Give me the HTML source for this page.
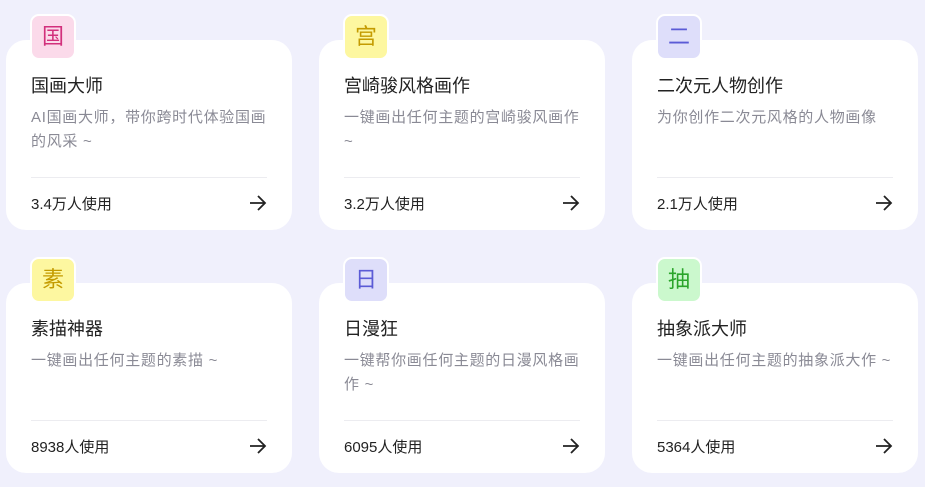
<!DOCTYPE html>
<html><head><meta charset="utf-8"><style>
body{margin:0;width:925px;height:487px;background:#f0f0fc;font-family:"Liberation Sans","Noto Sans CJK SC",sans-serif;position:relative;overflow:hidden}
.card{position:absolute;width:286px;height:190px;background:#fff;border-radius:20px}
.badge{position:absolute;left:24px;top:-26px;width:42px;height:42px;border:2px solid #fff;border-radius:9px;font-size:22px;line-height:42px;text-align:center}
.t{position:absolute;left:25px;top:32px;font-size:18px;color:#222}
.d{position:absolute;left:25px;top:66px;width:260px;font-size:15px;line-height:24px;color:#8a8a95;white-space:nowrap;letter-spacing:0.7px}
.hr{position:absolute;left:25px;right:25px;top:137px;border-top:1px solid #ececf0}
.u{position:absolute;left:25px;top:153px;font-size:15px;color:#222}
.a{position:absolute;right:25px;top:155px}
</style></head><body>
<div class="card" style="left:6px;top:40px"><div class="badge" style="background:#fbdaea;color:#d2307c">国</div><div class="t">国画大师</div><div class="d">AI国画大师，带你跨时代体验国画<br>的风采 ~</div><div class="hr"></div><div class="u">3.4万人使用</div><svg class="a" width="18" height="16" viewBox="0 0 18 16"><path d="M1 8H16M9 1L16 8L9 15" fill="none" stroke="#222" stroke-width="1.8"/></svg></div>
<div class="card" style="left:319px;top:40px"><div class="badge" style="background:#fdf7a0;color:#c49b00">宫</div><div class="t">宫崎骏风格画作</div><div class="d">一键画出任何主题的宫崎骏风画作<br>~</div><div class="hr"></div><div class="u">3.2万人使用</div><svg class="a" width="18" height="16" viewBox="0 0 18 16"><path d="M1 8H16M9 1L16 8L9 15" fill="none" stroke="#222" stroke-width="1.8"/></svg></div>
<div class="card" style="left:632px;top:40px"><div class="badge" style="background:#dedefa;color:#5b5bd6">二</div><div class="t">二次元人物创作</div><div class="d">为你创作二次元风格的人物画像</div><div class="hr"></div><div class="u">2.1万人使用</div><svg class="a" width="18" height="16" viewBox="0 0 18 16"><path d="M1 8H16M9 1L16 8L9 15" fill="none" stroke="#222" stroke-width="1.8"/></svg></div>
<div class="card" style="left:6px;top:283px"><div class="badge" style="background:#fdf7a0;color:#c49b00">素</div><div class="t">素描神器</div><div class="d">一键画出任何主题的素描 ~</div><div class="hr"></div><div class="u">8938人使用</div><svg class="a" width="18" height="16" viewBox="0 0 18 16"><path d="M1 8H16M9 1L16 8L9 15" fill="none" stroke="#222" stroke-width="1.8"/></svg></div>
<div class="card" style="left:319px;top:283px"><div class="badge" style="background:#dedefa;color:#5b5bd6">日</div><div class="t">日漫狂</div><div class="d">一键帮你画任何主题的日漫风格画<br>作 ~</div><div class="hr"></div><div class="u">6095人使用</div><svg class="a" width="18" height="16" viewBox="0 0 18 16"><path d="M1 8H16M9 1L16 8L9 15" fill="none" stroke="#222" stroke-width="1.8"/></svg></div>
<div class="card" style="left:632px;top:283px"><div class="badge" style="background:#cbf8cd;color:#2aa52a">抽</div><div class="t">抽象派大师</div><div class="d">一键画出任何主题的抽象派大作 ~</div><div class="hr"></div><div class="u">5364人使用</div><svg class="a" width="18" height="16" viewBox="0 0 18 16"><path d="M1 8H16M9 1L16 8L9 15" fill="none" stroke="#222" stroke-width="1.8"/></svg></div>
</body></html>
